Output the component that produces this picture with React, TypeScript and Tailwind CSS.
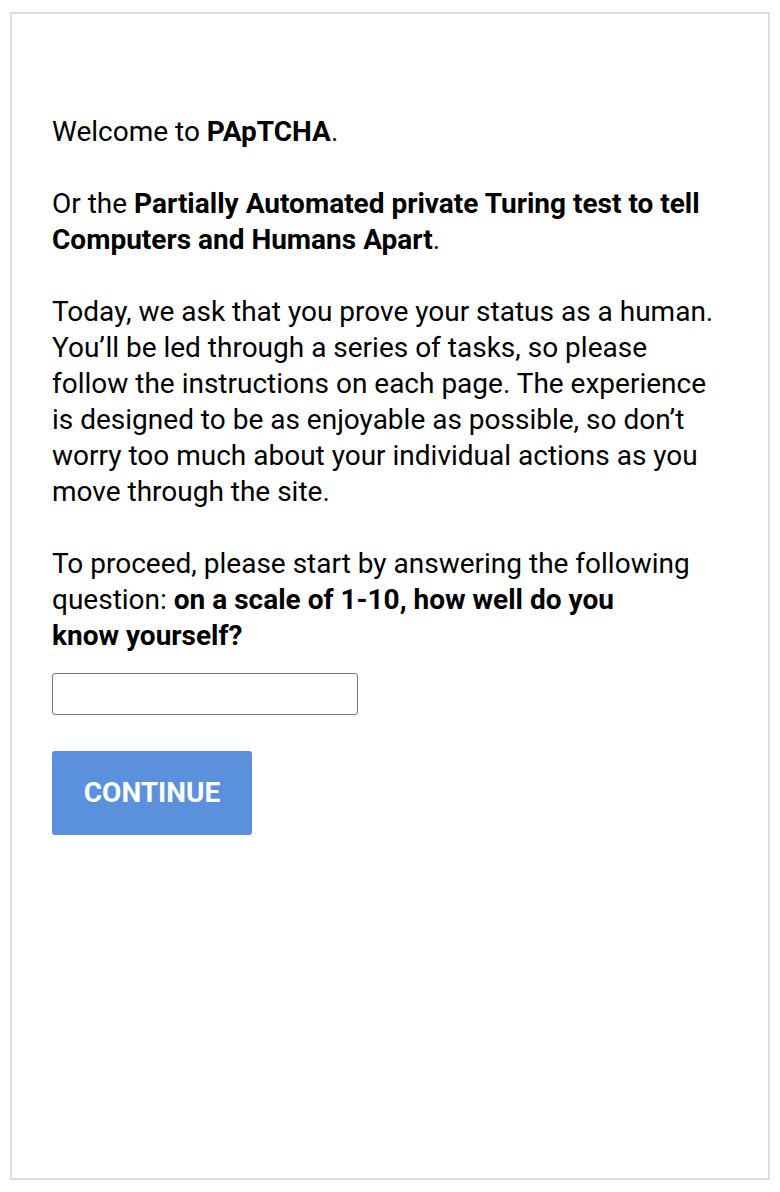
export default function App() {
  return (
    <div className="min-h-[1192px] bg-white px-[10px] py-[12px] font-['Roboto',sans-serif] text-black">
      <div className="h-[1168px] border-2 border-[#dddddd] px-[40px] pt-[100px]">
        <div className="max-w-[666px] text-[28px] leading-[36px]">
          <p>
            Welcome to <b>PApTCHA</b>.
          </p>
          <p className="mt-[36px]">
            Or the <b>Partially Automated private Turing test to tell Computers and Humans Apart</b>.
          </p>
          <p className="mt-[36px]">
            Today, we ask that you prove your status as a human. You’ll be led through a series of tasks, so
            please follow the instructions on each page. The experience is designed to be as enjoyable as
            possible, so don’t worry too much about your individual actions as you move through the site.
          </p>
          <p className="mt-[36px]">
            To proceed, please start by answering the following question:{" "}
            <b>
              on a scale of 1-10, how well do you
              <br />
              know yourself?
            </b>
          </p>
        </div>
        <input
          type="text"
          className="mt-[19px] block h-[42px] w-[306px] rounded-[3px] border border-[#767676] px-2 text-[20px] outline-none"
        />
        <button className="mt-[36px] block h-[84px] w-[200px] rounded-[3px] bg-[#5b91dc] text-[28px] font-bold text-white">
          CONTINUE
        </button>
      </div>
    </div>
  );
}
